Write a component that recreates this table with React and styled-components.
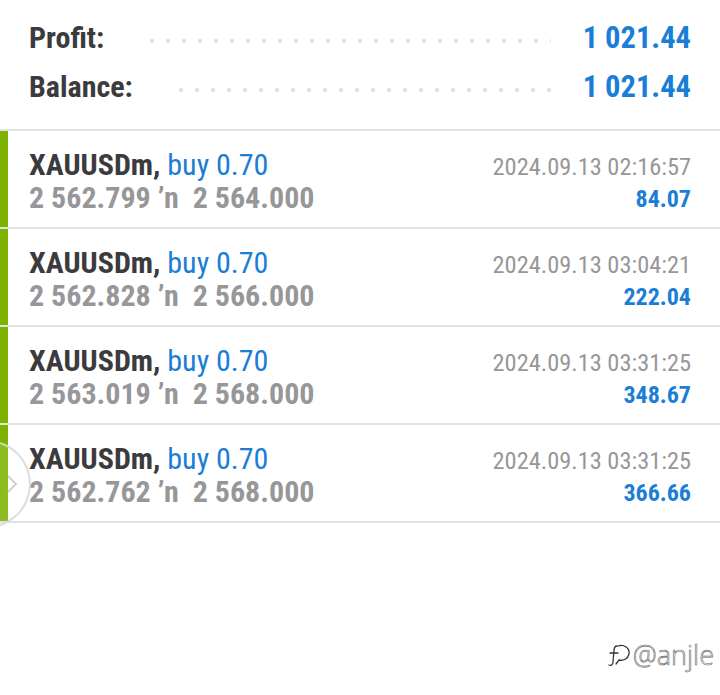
import React from "react";
import styled, { createGlobalStyle } from "styled-components";

const Global = createGlobalStyle`
  html, body { margin: 0; padding: 0; background: #fff; }
  body {
    font-family: Roboto, "Liberation Sans", sans-serif;
    -webkit-font-smoothing: antialiased;
  }
`;

const BLUE = "#1a7dd6";
const DARK = "#3b3b3e";
const GRAY = "#97979a";
const GREEN = "#7db300";
const LINE = "#e2e2e2";

const Page = styled.div`
  position: relative;
  width: 720px;
  height: 695px;
  overflow: hidden;
  background: #fff;
`;

const Summary = styled.div`
  display: flex;
  flex-direction: column;
  padding: 13px 29px 0 29px;
  height: 131px;
  box-sizing: border-box;
  border-bottom: 2px solid ${LINE};
`;

const SummaryRow = styled.div`
  display: flex;
  align-items: center;
  height: 49px;
`;

const Label = styled.span`
  font-size: 30px;
  font-weight: 700;
  font-stretch: 87.5%;
  color: ${DARK};
`;

const Leader = styled.span`
  flex: 1;
  height: 6px;
  margin: 6px ${(p) => p.$right}px 0 ${(p) => p.$left}px;
  background-image: radial-gradient(circle, #e3e3e3 2.2px, transparent 2.6px);
  background-size: 16px 6px;
  background-repeat: repeat-x;
  background-position: left center;
`;

const Amount = styled.span`
  font-size: 30.5px;
  font-weight: 700;
  font-stretch: 87.5%;
  color: ${BLUE};
`;

const List = styled.div`
  display: flex;
  flex-direction: column;
`;

const Trade = styled.div`
  display: flex;
  height: 96px;
  border-bottom: 2px solid ${LINE};
`;

const Bar = styled.div`
  width: 8px;
  background: ${GREEN};
  flex-shrink: 0;
`;

const TradeBody = styled.div`
  flex: 1;
  display: flex;
  justify-content: space-between;
  padding: 17px 29px 0 21px;
`;

const Col = styled.div`
  display: flex;
  flex-direction: column;
  align-items: ${(p) => (p.$right ? "flex-end" : "flex-start")};
`;

const Line1 = styled.div`
  font-size: 30px;
  line-height: 33px;
  font-stretch: 87.5%;
  white-space: pre;
`;

const Symbol = styled.span`
  font-weight: 700;
  color: ${DARK};
`;

const Side = styled.span`
  font-weight: 400;
  color: ${BLUE};
`;

const Prices = styled.div`
  font-size: 30px;
  line-height: 33px;
  font-weight: 700;
  font-stretch: 87.5%;
  color: ${GRAY};
  white-space: pre;
`;

const Time = styled.div`
  font-size: 24.4px;
  line-height: 33px;
  font-stretch: 87.5%;
  color: ${GRAY};
  padding-top: 2px;
  height: 31px;
`;

const Pnl = styled.div`
  font-size: 24px;
  line-height: 33px;
  font-weight: 700;
  font-stretch: 87.5%;
  color: ${BLUE};
  padding-top: 2px;
`;

const EdgeHandle = styled.div`
  position: absolute;
  left: -57px;
  top: 440px;
  width: 88px;
  height: 88px;
  border-radius: 50%;
  border: 2px solid rgba(215, 215, 215, 0.85);
  background: rgba(255, 255, 255, 0.12);
  display: flex;
  align-items: center;
  justify-content: flex-end;
  padding-right: 11px;
  box-sizing: border-box;
`;

const Watermark = styled.div`
  position: absolute;
  right: 6px;
  top: 636px;
  display: flex;
  align-items: center;
  gap: 1px;
  font-family: "Open Sans", Roboto, sans-serif;
  font-size: 27px;
  font-weight: 300;
  color: #fff;
  -webkit-text-stroke: 0.6px #666;
`;

const trades = [
  { open: "2 562.799", close: "2 564.000", time: "2024.09.13 02:16:57", pnl: "84.07" },
  { open: "2 562.828", close: "2 566.000", time: "2024.09.13 03:04:21", pnl: "222.04" },
  { open: "2 563.019", close: "2 568.000", time: "2024.09.13 03:31:25", pnl: "348.67" },
  { open: "2 562.762", close: "2 568.000", time: "2024.09.13 03:31:25", pnl: "366.66" },
];

export default function App() {
  return (
    <Page>
      <Global />
      <Summary>
        <SummaryRow>
          <Label>Profit:</Label>
          <Leader $left={40} $right={32} />
          <Amount>1 021.44</Amount>
        </SummaryRow>
        <SummaryRow>
          <Label>Balance:</Label>
          <Leader $left={40} $right={20} />
          <Amount>1 021.44</Amount>
        </SummaryRow>
      </Summary>
      <List>
        {trades.map((t, i) => (
          <Trade key={i}>
            <Bar />
            <TradeBody>
              <Col>
                <Line1>
                  <Symbol>XAUUSDm,</Symbol> <Side>buy 0.70</Side>
                </Line1>
                <Prices>{`${t.open} ’n  ${t.close}`}</Prices>
              </Col>
              <Col $right>
                <Time>{t.time}</Time>
                <Pnl>{t.pnl}</Pnl>
              </Col>
            </TradeBody>
          </Trade>
        ))}
      </List>
      <EdgeHandle>
        <svg width="12" height="20" viewBox="0 0 12 20">
          <path d="M2 2 L10 10 L2 18" fill="none" stroke="#cfcfcf" strokeWidth="2" />
        </svg>
      </EdgeHandle>
      <Watermark>
        <svg width="24" height="26" viewBox="0 0 24 26">
          <path
            d="M9 4 C 7 4, 6 6, 6 9 L 5 20 C 5 23, 3 24, 1 23 M 2 11 L 10 11 M 10 4 C 16 2, 22 6, 21 12 C 20 17, 15 19, 11 18 L 8 22"
            fill="none"
            stroke="#333"
            strokeWidth="1.3"
            strokeLinecap="round"
          />
        </svg>
        <span>@anjle</span>
      </Watermark>
    </Page>
  );
}
